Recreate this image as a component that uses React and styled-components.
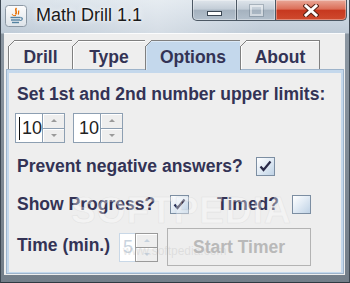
import React from 'react';
import styled, { createGlobalStyle } from 'styled-components';

const Global = createGlobalStyle`
  html, body { margin: 0; padding: 0; background: #ffffff; }
  body {
    width: 350px; height: 283px; overflow: hidden;
    font-family: "Liberation Sans", Arial, sans-serif;
  }
`;

const Window = styled.div`
  position: relative;
  width: 350px;
  height: 283px;
  box-sizing: border-box;
  display: flex;
  flex-direction: column;
  overflow: hidden;
  border-left: 1px solid #3f4954;
  border-right: 1px solid #3f4954;
  border-bottom: 1px solid #2f3942;
  background: linear-gradient(180deg, #d9e2ea 0px, #c9d4df 20px, #bfcbd7 33px, #8c97a2 34px, #737e89 100%);
`;

const TitleBar = styled.div`
  height: 33px;
  flex: none;
  display: flex;
  align-items: flex-start;
  background: linear-gradient(90deg, rgba(255,255,255,0.0) 0%, rgba(255,255,255,0.35) 45%, rgba(255,255,255,0.0) 75%);
`;

const AppIcon = styled.svg`
  margin: 5px 0 0 4px;
  flex: none;
`;

const Title = styled.div`
  margin: 4px 0 0 9px;
  font-family: "Liberation Sans", Arial, sans-serif;
  font-size: 18px;
  line-height: 22px;
  color: #1a1a1a;
  text-shadow: 0 0 6px rgba(255,255,255,0.95), 0 0 2px rgba(255,255,255,0.9);
  white-space: nowrap;
`;

const Spacer = styled.div`
  flex: 1;
`;

const Controls = styled.div`
  display: flex;
  margin-right: 2px;
  height: 21px;
`;

const CtrlButton = styled.div`
  box-sizing: border-box;
  width: ${p => p.$w}px;
  height: 21px;
  display: flex;
  align-items: center;
  justify-content: center;
  border: 1px solid #4c5864;
  border-top: none;
  margin-left: -1px;
  background: ${p => p.$close
    ? 'linear-gradient(180deg, #e9a898 0%, #dc6e58 45%, #c7381f 52%, #cf4a2e 100%)'
    : 'linear-gradient(180deg, #dfe5eb 0%, #c3cdd7 45%, #a5b2bf 52%, #b3c0cc 100%)'};
  border-bottom-left-radius: ${p => (p.$first ? '5px' : '0')};
  border-bottom-right-radius: ${p => (p.$close ? '5px' : '0')};
  box-shadow: inset 0 0 0 1px rgba(255,255,255,0.35);
`;

const MinGlyph = styled.div`
  width: 13px;
  height: 3px;
  margin-top: 6px;
  background: #ffffff;
  border: 1px solid #3a4652;
`;

const MaxGlyph = styled.div`
  width: 9px;
  height: 7px;
  border: 2px solid rgba(255,255,255,0.45);
  outline: 1px solid rgba(90,105,120,0.35);
`;

const Client = styled.div`
  flex: 1;
  display: flex;
  flex-direction: column;
  margin: 0 4px 7px 3px;
  padding: 7px 1px 1px 2px;
  background: #eeeeee;
  box-shadow: inset 0 1px 0 #fbfcfd;
`;

const TabRow = styled.div`
  display: flex;
  height: 29px;
  margin-left: 2px;
  flex: none;
`;

const Tab = styled.div`
  position: relative;
  z-index: 1;
  box-sizing: border-box;
  width: ${p => p.$w}px;
  height: ${p => (p.$active ? 30 : 29)}px;
  margin-left: ${p => (p.$firstTab ? 0 : -1)}px;
  padding-top: 3px;
  display: flex;
  align-items: center;
  justify-content: center;
  border: 1px solid #808080;
  border-bottom: none;
  background: ${p => (p.$active ? '#c4d8ec' : '#eeeeee')};
  box-shadow: ${p => (p.$active ? 'inset 1px 1px 0 #dce9f6' : 'inset 1px 1px 0 #ffffff')};
  font-weight: bold;
  font-size: 17.5px;
  line-height: 20px;
  color: #333355;
  white-space: nowrap;
  &::before {
    content: "";
    position: absolute;
    top: -1px;
    left: -1px;
    width: 7px;
    height: 7px;
    background: linear-gradient(135deg, #eeeeee 0 44%, #808080 44% 57%, transparent 57%);
  }
`;

const Panel = styled.div`
  flex: 1;
  box-sizing: border-box;
  display: flex;
  flex-direction: column;
  align-items: flex-start;
  padding: 14px 8px 0 8px;
  border: 1px solid #9db3ca;
  box-shadow: inset 0 3px 0 #c4d8ec, inset 2px 0 0 #c4d8ec, inset -2px 0 0 #c4d8ec, inset 0 -1px 0 #c4d8ec;
`;

const Label = styled.div`
  font-weight: bold;
  font-size: 17.5px;
  line-height: 20px;
  color: ${p => (p.$disabled ? '#b8b8b8' : '#333355')};
  white-space: nowrap;
  padding-left: ${p => p.$indent ?? 0}px;
  margin-left: ${p => p.$ml ?? 0}px;
  margin-bottom: ${p => p.$mb ?? 0}px;
`;

const Row = styled.div`
  display: flex;
  align-items: center;
  margin-top: ${p => p.$mt}px;
  height: ${p => p.$h}px;
`;

const SpinnerBox = styled.div`
  display: flex;
  height: ${p => p.$h}px;
  margin-left: ${p => p.$ml ?? 0}px;
`;

const Field = styled.div`
  box-sizing: border-box;
  width: ${p => p.$w}px;
  height: 100%;
  display: flex;
  align-items: center;
  padding-left: ${p => p.$pl}px;
  background: #ffffff;
  border: 1px solid ${p => (p.$disabled ? '#c9d8e7' : '#8d9fb2')};
  border-right: none;
  font-size: 18px;
  line-height: 20px;
  color: ${p => (p.$disabled ? '#c9d4df' : '#222222')};
`;

const Caret = styled.span`
  display: inline-block;
  width: 1.5px;
  height: 23px;
  background: #111111;
  margin-right: 1.5px;
`;

const Arrows = styled.div`
  box-sizing: border-box;
  width: 23px;
  height: 100%;
  display: flex;
  flex-direction: column;
  border: 1px solid ${p => (p.$disabled ? '#9a9a9a' : '#8d9fb2')};
  background: #eeeeee;
`;

const ArrowCell = styled.div`
  flex: 1;
  display: flex;
  align-items: center;
  justify-content: center;
  border-top: ${p => (p.$bottom ? `1px solid ${p.$disabled ? '#9a9a9a' : '#8d9fb2'}` : 'none')};
  box-shadow: inset 1px 1px 0 #ffffff;
`;

const Tri = styled.div`
  width: 0;
  height: 0;
  border-left: 3px solid transparent;
  border-right: 3px solid transparent;
  ${p => (p.$down
    ? `border-top: 3px solid ${p.$disabled ? '#c6d2de' : '#9a9a9a'};`
    : `border-bottom: 3px solid ${p.$disabled ? '#c6d2de' : '#9a9a9a'};`)}
`;

const CheckBox = styled.div`
  box-sizing: border-box;
  width: 19px;
  height: 19px;
  flex: none;
  margin-left: ${p => p.$ml}px;
  border: 1px solid #7c8ea2;
  background: linear-gradient(135deg, #ffffff 0%, #e3ecf5 45%, #bfd2e5 100%);
  display: flex;
  align-items: center;
  justify-content: center;
`;

const Button = styled.div`
  box-sizing: border-box;
  width: 144px;
  height: 38px;
  margin-left: 9px;
  display: flex;
  align-items: center;
  justify-content: center;
  border: 1px solid #b3b3b3;
  background: #eeeeee;
  font-weight: bold;
  font-size: 17.5px;
  color: #b9b9b9;
`;

const Watermark = styled.div`
  position: absolute;
  left: 70px;
  top: 190px;
  font-family: "Liberation Sans", Arial, sans-serif;
  font-size: 37px;
  font-weight: bold;
  letter-spacing: 1px;
  color: rgba(255,255,255,0.35);
  -webkit-text-stroke: 0.6px rgba(200,200,200,0.35);
  pointer-events: none;
  white-space: nowrap;
`;

const WatermarkSmall = styled.div`
  position: absolute;
  left: 122px;
  top: 244px;
  font-family: "Liberation Sans", Arial, sans-serif;
  font-size: 12px;
  color: rgba(190,190,190,0.35);
  pointer-events: none;
  white-space: nowrap;
`;

function Spinner({ value, caret, disabled, fieldW, pl, h, ml }) {
  return (
    <SpinnerBox $h={h} $ml={ml}>
      <Field $w={fieldW} $pl={pl} $disabled={disabled}>
        {caret && <Caret />}
        {value}
      </Field>
      <Arrows $disabled={disabled}>
        <ArrowCell $disabled={disabled}><Tri $disabled={disabled} /></ArrowCell>
        <ArrowCell $bottom $disabled={disabled}><Tri $down $disabled={disabled} /></ArrowCell>
      </Arrows>
    </SpinnerBox>
  );
}

function Check({ checked, ml }) {
  return (
    <CheckBox $ml={ml}>
      {checked && (
        <svg width="13" height="12" viewBox="0 0 13 12">
          <path d="M1.5 6.5 L4.5 10 L11.5 1.5" fill="none" stroke="#2a2a48" strokeWidth="2.2" strokeLinejoin="miter" />
          <path d="M1.5 7.5 L4.5 10.5 L5.5 8 Z" fill="#2a2a48" />
        </svg>
      )}
    </CheckBox>
  );
}

export default function App() {
  return (
    <>
      <Global />
      <Window>
        <TitleBar>
          <AppIcon width="22" height="22" viewBox="0 0 22 22">
            <defs>
              <linearGradient id="ig" x1="0" y1="0" x2="0" y2="1">
                <stop offset="0" stopColor="#fdfdfd" />
                <stop offset="1" stopColor="#dde3e9" />
              </linearGradient>
            </defs>
            <rect x="0.5" y="0.5" width="21" height="21" rx="3" fill="url(#ig)" stroke="#8c98a4" />
            <path d="M11.5 3 C9 5 13 6.5 10.5 9.5" fill="none" stroke="#e76f00" strokeWidth="1.6" />
            <path d="M14 5.5 C12.8 7 14.6 7.6 13 9.5" fill="none" stroke="#e76f00" strokeWidth="1.2" />
            <path d="M8 9 C6 10 9 11 11 10.5" fill="none" stroke="#e76f00" strokeWidth="1" />
            <path d="M5.5 12.5 H15.5" stroke="#5382a1" strokeWidth="1.4" />
            <path d="M6 15 H15" stroke="#5382a1" strokeWidth="1.4" />
            <path d="M7 17.5 H14" stroke="#5382a1" strokeWidth="1.4" />
            <path d="M15.5 12.5 C18 12.5 18 15.5 15 15.5" fill="none" stroke="#5382a1" strokeWidth="1.2" />
          </AppIcon>
          <Title>Math Drill 1.1</Title>
          <Spacer />
          <Controls>
            <CtrlButton $w={45} $first><MinGlyph /></CtrlButton>
            <CtrlButton $w={40}><MaxGlyph /></CtrlButton>
            <CtrlButton $w={72} $close>
              <svg width="16" height="13" viewBox="0 0 16 13">
                <path d="M3 2 L13 11 M13 2 L3 11" stroke="#5a2418" strokeWidth="5" strokeLinecap="square" />
                <path d="M3 2 L13 11 M13 2 L3 11" stroke="#ffffff" strokeWidth="3" strokeLinecap="square" />
              </svg>
            </CtrlButton>
          </Controls>
        </TitleBar>
        <Client>
          <TabRow>
            <Tab $w={65} $firstTab>Drill</Tab>
            <Tab $w={74}>Type</Tab>
            <Tab $w={96} $active>Options</Tab>
            <Tab $w={80}>About</Tab>
          </TabRow>
          <Panel>
            <Label $indent={2}>Set 1st and 2nd number upper limits:</Label>
            <Row $mt={9} $h={30}>
              <Spinner value="10" caret fieldW={27} pl={3} h={30} />
              <Spinner value="10" fieldW={27} pl={5} h={30} ml={8} />
            </Row>
            <Row $mt={13} $h={20}>
              <Label $indent={2}>Prevent negative answers?</Label>
              <Check checked ml={13} />
            </Row>
            <Row $mt={18} $h={20}>
              <Label $indent={2}>Show Progress?</Label>
              <Check checked ml={15} />
              <Label $ml={28}>Timed?</Label>
              <Check ml={13} />
            </Row>
            <Row $mt={14} $h={38}>
              <Label $indent={2} $mb={5}>Time (min.)</Label>
              <Spinner value="5" disabled fieldW={16} pl={3} h={29} ml={9} />
              <Button>Start Timer</Button>
            </Row>
          </Panel>
        </Client>
        <Watermark>SOFTPEDIA</Watermark>
        <WatermarkSmall>www.softpedia.com</WatermarkSmall>
      </Window>
    </>
  );
}
